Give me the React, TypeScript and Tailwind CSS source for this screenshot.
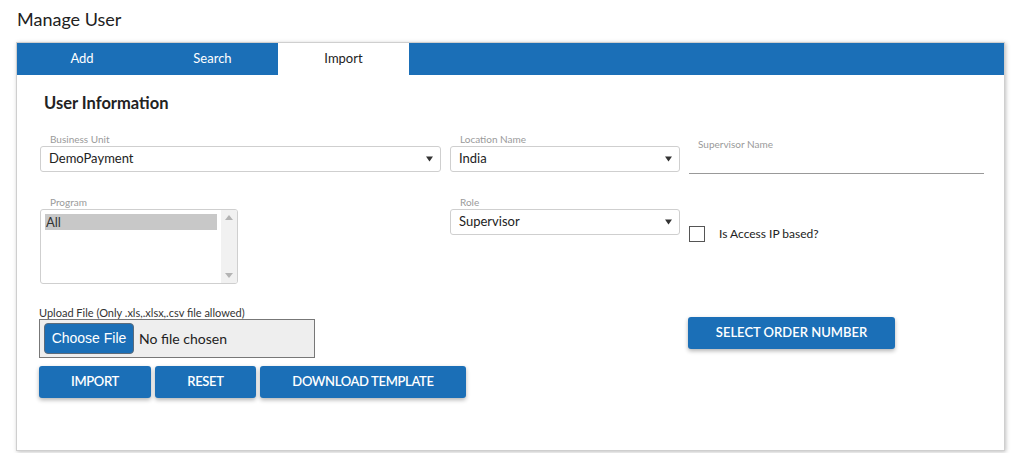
import React from "react";

const font = { fontFamily: "Lato, 'Open Sans', Arial, sans-serif" };

function Caret() {
  return (
    <svg width="7" height="6" viewBox="0 0 7 6" className="shrink-0">
      <path d="M0 0.5 H7 L3.5 5.5 Z" fill="#333" />
    </svg>
  );
}

function SelectBox({ value, w }: { value: string; w: string }) {
  return (
    <div className={`${w} h-[26px] border border-[#cfcfcf] rounded-[3px] bg-white flex items-center justify-between pl-[8px] pr-[7px]`}>
      <span className="text-[13px] text-[#222]">{value}</span>
      <Caret />
    </div>
  );
}

function Label({ children, cls = "" }: { children: React.ReactNode; cls?: string }) {
  return <div className={`text-[10px] leading-[12px] text-[#9a9a9a] pl-[10px] ${cls}`}>{children}</div>;
}

const btn =
  "shrink-0 h-[32px] rounded-[3px] bg-[#1b6fb7] text-white text-[13px] font-semibold flex items-center justify-center shadow-[0_2px_4px_rgba(0,0,0,0.3)]";

export default function App() {
  return (
    <div className="w-[1022px] h-[453px] bg-white relative overflow-hidden" style={font}>
      <div className="pl-[17px] pt-[8px] h-[42px] text-[18px] leading-[22px] text-[#222]">Manage User</div>
      <div className="ml-[16px] w-[989px] h-[409px] border border-[#cfcfcf] bg-white shadow-[1px_1px_4px_rgba(0,0,0,0.25)]">
        <div className="h-[32px] bg-[#1b6fb7] flex">
          <div className="w-[130px] flex items-center justify-center text-[13px] text-white">Add</div>
          <div className="w-[131px] flex items-center justify-center text-[13px] text-white">Search</div>
          <div className="w-[131px] flex items-center justify-center text-[13px] text-[#222] bg-white">Import</div>
        </div>
        <div className="pl-[23px] pt-[18px]">
          <div className="pl-[4px] text-[16.5px] leading-[20px] font-bold text-[#222]">User Information</div>

          {/* Row 1 */}
          <div className="flex gap-[9px] mt-[20px]">
            <div className="w-[401px]">
              <Label>Business Unit</Label>
              <div className="mt-[1px]">
                <SelectBox value="DemoPayment" w="w-[401px]" />
              </div>
            </div>
            <div className="w-[230px]">
              <Label>Location Name</Label>
              <div className="mt-[1px]">
                <SelectBox value="India" w="w-[230px]" />
              </div>
            </div>
            <div className="w-[295px] pt-[5px]">
              <Label cls="!pl-[9px]">Supervisor Name</Label>
              <div className="h-[24px] border-b border-[#999]"></div>
            </div>
          </div>

          {/* Row 2 */}
          <div className="flex gap-[9px] mt-[22px]">
            <div className="w-[401px]">
              <Label>Program</Label>
              <div className="mt-[1px] w-[198px] h-[75px] border border-[#cfcfcf] rounded-[3px] bg-white flex overflow-hidden">
                <div className="flex-1 pl-[4px] pt-[4px] pr-[4px]">
                  <div className="h-[16px] bg-[#c8c8c8] text-[13px] leading-[16px] text-[#333] pl-[1px]">All</div>
                </div>
                <div className="w-[16px] bg-[#f1f1f1] flex flex-col items-center justify-between py-[5px]">
                  <svg width="8" height="5" viewBox="0 0 8 5"><path d="M0 5 L4 0 L8 5 Z" fill="#b4b4b4" /></svg>
                  <svg width="8" height="5" viewBox="0 0 8 5"><path d="M0 0 L8 0 L4 5 Z" fill="#b4b4b4" /></svg>
                </div>
              </div>
            </div>
            <div className="w-[230px]">
              <Label>Role</Label>
              <div className="mt-[1px]">
                <SelectBox value="Supervisor" w="w-[230px]" />
              </div>
            </div>
            <div className="w-[295px] pt-[30px] flex items-start">
              <div className="w-[16px] h-[16px] border border-[#555] bg-white shrink-0"></div>
              <span className="ml-[14px] text-[12px] leading-[16px] text-[#222]">Is Access IP based?</span>
            </div>
          </div>

          {/* Row 3 */}
          <div className="flex gap-[9px] mt-[22px] -ml-[1px]">
            <div className="w-[402px]">
              <div className="text-[11px] leading-[12px] text-[#333] pt-[1px] whitespace-nowrap">Upload File (Only .xls,.xlsx,.csv file allowed)</div>
              <div className="w-[276px] h-[39px] border border-[#777] bg-[#eeeeee] flex items-center pl-[4px]">
                <div
                  className="h-[31px] w-[90px] rounded-[4px] bg-[#1b6fb7] border border-[#5b6b7b] text-white text-[14px] flex items-center justify-center"
                  style={{ fontFamily: "'Liberation Sans', Arial, sans-serif" }}
                >
                  Choose File
                </div>
                <span className="ml-[5px] text-[14px] text-[#222]">No file chosen</span>
              </div>
              <div className="flex mt-[8px] gap-[4px]">
                <div className={`${btn} w-[112px] tracking-[-0.35px]`}>IMPORT</div>
                <div className={`${btn} w-[101px] tracking-[-0.35px]`}>RESET</div>
                <div className={`${btn} w-[206px] tracking-[-0.35px]`}>DOWNLOAD TEMPLATE</div>
              </div>
            </div>
            <div className="w-[230px]"></div>
            <div className="w-[295px] pt-[11px]">
              <div className={`${btn} w-[207px] -ml-[1px]`}>SELECT ORDER NUMBER</div>
            </div>
          </div>
        </div>
      </div>
    </div>
  );
}
